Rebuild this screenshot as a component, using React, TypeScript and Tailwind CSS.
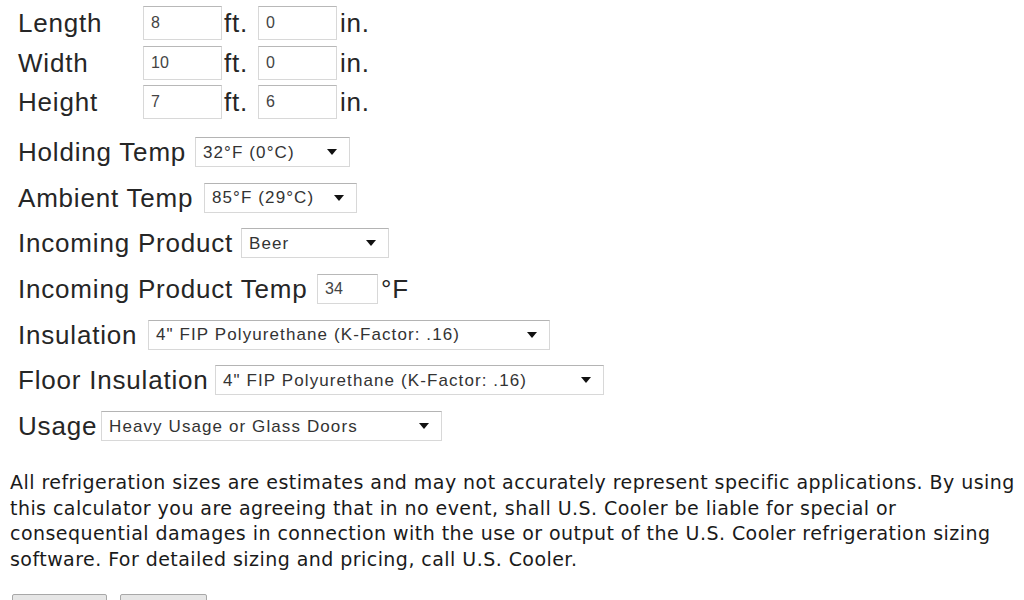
import React from "react";

function Arrow() {
  return (
    <svg width="10" height="6" viewBox="0 0 10 6" className="shrink-0">
      <path d="M0 0 H10 L5 6 Z" fill="#111" />
    </svg>
  );
}

function TextBox({ value, w }: { value: string; w: string }) {
  return (
    <div
      className={`${w} h-[34px] shrink-0 flex items-center pl-[7px] bg-white border border-[#d8d8d8] border-t-[#b8b8b8] text-[16px] tracking-normal text-[#444]`}
    >
      {value}
    </div>
  );
}

function SelectBox({ value, w }: { value: string; w: string }) {
  return (
    <div
      className={`${w} h-[30px] shrink-0 flex items-center justify-between pl-[7px] pr-[12px] bg-white border border-[#d8d8d8] border-t-[#b4b4b4] text-[17px] tracking-[1.1px] text-[#333]`}
    >
      <span className="whitespace-nowrap">{value}</span>
      <Arrow />
    </div>
  );
}

function DimRow({ label, ft, inch }: { label: string; ft: string; inch: string }) {
  return (
    <div className="flex items-center h-[34px]">
      <div className="w-[125px] shrink-0">{label}</div>
      <TextBox value={ft} w="w-[79px]" />
      <div className="w-[36px] pl-[2px] shrink-0">ft.</div>
      <TextBox value={inch} w="w-[79px]" />
      <div className="pl-[3px]">in.</div>
    </div>
  );
}

function SelRow({ label, lw, value, w }: { label: string; lw: string; value: string; w: string }) {
  return (
    <div className="flex items-center h-[30px]">
      <div className={`${lw} shrink-0 whitespace-nowrap`}>{label}</div>
      <SelectBox value={value} w={w} />
    </div>
  );
}

export default function App() {
  return (
    <div className="w-[1024px] h-[600px] overflow-hidden bg-white relative font-['Liberation_Sans',Arial,sans-serif] text-[#262626]">
      <div className="pl-[18px] pt-[6px] text-[26px] tracking-[0.8px] leading-none">
        <div className="flex flex-col gap-[5.5px]">
          <DimRow label="Length" ft="8" inch="0" />
          <DimRow label="Width" ft="10" inch="0" />
          <DimRow label="Height" ft="7" inch="6" />
        </div>
        <div className="flex flex-col gap-[15.7px] mt-[18px]">
          <SelRow label="Holding Temp" lw="w-[177px]" value="32°F (0°C)" w="w-[155px]" />
          <SelRow label="Ambient Temp" lw="w-[186px]" value="85°F (29°C)" w="w-[153px]" />
          <SelRow label="Incoming Product" lw="w-[223px]" value="Beer" w="w-[148px]" />
          <div className="flex items-center h-[30px]">
            <div className="w-[299px] shrink-0 whitespace-nowrap">Incoming Product Temp</div>
            <div className="w-[61px] h-[30px] shrink-0 flex items-center pl-[7px] bg-white border border-[#d8d8d8] border-t-[#b8b8b8] text-[16px] tracking-normal text-[#444]">
              34
            </div>
            <div className="pl-[3px]">°F</div>
          </div>
          <SelRow
            label="Insulation"
            lw="w-[130px]"
            value={'4" FIP Polyurethane (K-Factor: .16)'}
            w="w-[402px]"
          />
          <SelRow
            label="Floor Insulation"
            lw="w-[197px]"
            value={'4" FIP Polyurethane (K-Factor: .16)'}
            w="w-[389px]"
          />
          <SelRow label="Usage" lw="w-[83px]" value="Heavy Usage or Glass Doors" w="w-[341px]" />
        </div>
      </div>
      <p className="mt-[29px] pl-[10px] font-['DejaVu_Sans',Verdana,sans-serif] text-[19px] tracking-[0.45px] leading-[25.5px] text-[#1a1a1a] whitespace-nowrap">
        All refrigeration sizes are estimates and may not accurately represent specific applications. By using
        <br />
        this calculator you are agreeing that in no event, shall U.S. Cooler be liable for special or
        <br />
        consequential damages in connection with the use or output of the U.S. Cooler refrigeration sizing
        <br />
        software. For detailed sizing and pricing, call U.S. Cooler.
      </p>
      <div className="flex gap-[13px] pl-[12px] mt-[22px]">
        <div className="w-[95px] h-[24px] bg-[#e6e6e6] border border-[#a8a8a8] rounded-[2px]" />
        <div className="w-[87px] h-[24px] bg-[#e6e6e6] border border-[#a8a8a8] rounded-[2px]" />
      </div>
    </div>
  );
}
